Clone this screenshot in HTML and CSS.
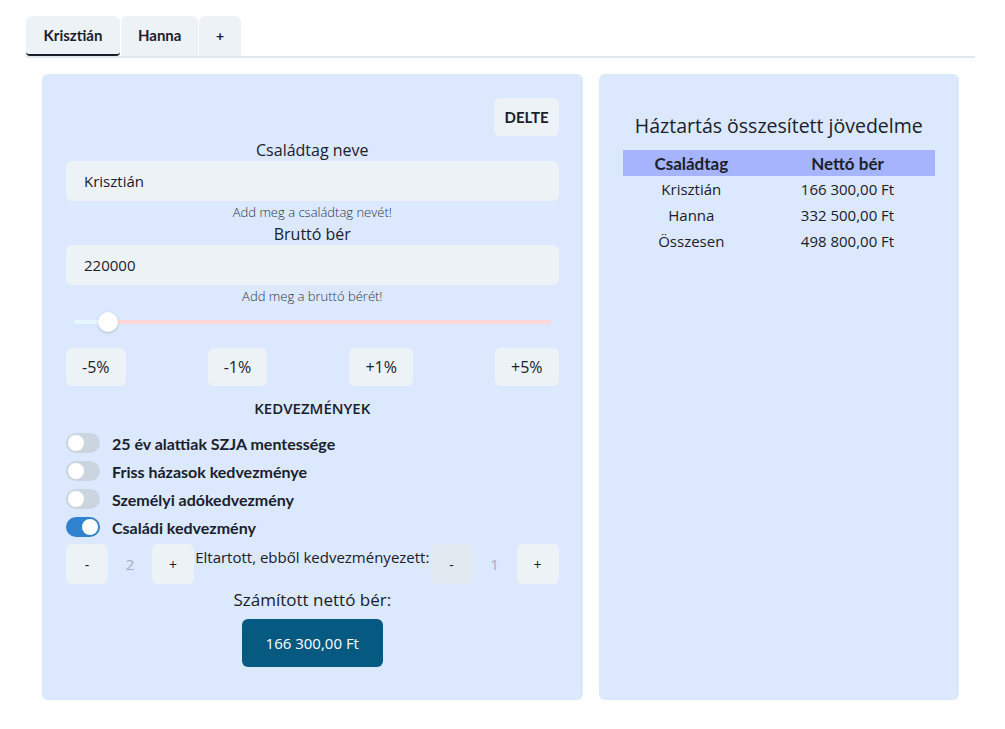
FILE: index.html
```html
<!DOCTYPE html>
<html lang="hu">
<head>
<meta charset="utf-8">
<title>Háztartás</title>
<link rel="stylesheet" href="styles.css">
</head>
<body>
<div class="app">
  <div class="tabs">
    <button class="tab active">Krisztián</button>
    <button class="tab">Hanna</button>
    <button class="tab plus">+</button>
  </div>
  <div class="content">
    <section class="panel left">
      <div class="del-row"><button class="btn del">DELTE</button></div>
      <label class="label">Családtag neve</label>
      <div class="input">Krisztián</div>
      <div class="helper">Add meg a családtag nevét!</div>
      <label class="label">Bruttó bér</label>
      <div class="input">220000</div>
      <div class="helper">Add meg a bruttó bérét!</div>
      <div class="slider">
        <div class="track"><div class="fill"></div><div class="rest"></div></div>
        <div class="thumb"></div>
      </div>
      <div class="pct-row">
        <button class="btn pct">-5%</button>
        <button class="btn pct">-1%</button>
        <button class="btn pct">+1%</button>
        <button class="btn pct">+5%</button>
      </div>
      <h3 class="section-title">KEDVEZMÉNYEK</h3>
      <ul class="toggles">
        <li><span class="switch"><span class="knob"></span></span>25 év alattiak SZJA mentessége</li>
        <li><span class="switch"><span class="knob"></span></span>Friss házasok kedvezménye</li>
        <li><span class="switch"><span class="knob"></span></span>Személyi adókedvezmény</li>
        <li><span class="switch on"><span class="knob"></span></span>Családi kedvezmény</li>
      </ul>
      <div class="counter-row">
        <div class="counter">
          <button class="btn sq">-</button>
          <span class="num">2</span>
          <button class="btn sq">+</button>
        </div>
        <div class="counter-text">Eltartott, ebből kedvezményezett:</div>
        <div class="counter">
          <button class="btn sq dim">-</button>
          <span class="num">1</span>
          <button class="btn sq">+</button>
        </div>
      </div>
      <div class="result-label">Számított nettó bér:</div>
      <div class="result-row"><button class="result">166 300,00 Ft</button></div>
    </section>
    <section class="panel right">
      <h2 class="title">Háztartás összesített jövedelme</h2>
      <table class="summary">
        <thead><tr><th>Családtag</th><th>Nettó bér</th></tr></thead>
        <tbody>
          <tr><td>Krisztián</td><td>166 300,00 Ft</td></tr>
          <tr><td>Hanna</td><td>332 500,00 Ft</td></tr>
          <tr><td>Összesen</td><td>498 800,00 Ft</td></tr>
        </tbody>
      </table>
    </section>
  </div>
</div>
</body>
</html>
```

FILE: styles.css
```css
* { box-sizing: border-box; }
html, body { margin: 0; padding: 0; background: #fff; }
body {
  font-family: "Open Sans", "Noto Sans", sans-serif;
  color: #1a202c;
  font-size: 15px;
}
button { font-family: inherit; color: inherit; border: 0; cursor: pointer; }
.app { padding: 16px 30px 0 26px; }
.tabs {
  display: flex;
  gap: 1px;
  border-bottom: 2px solid #e2e8f0;
}
.tab {
  height: 40px;
  padding: 0 17px;
  background: #edf2f7;
  border-radius: 6px 6px 0 0;
  font-family: "Lato", sans-serif;
  font-weight: 700;
  font-size: 15px;
  border-bottom: 2px solid transparent;
}
.tab.active { padding: 0 17.5px; border-bottom: 2px solid #1a202c; border-radius: 6px 6px 4px 4px; }
.tab.plus { padding: 0 16.5px; font-size: 14px; }
.content {
  display: grid;
  grid-template-columns: 3fr 2fr;
  gap: 16px;
  padding: 16px 16px 0;
}
.panel {
  background: #dbe8fe;
  border-radius: 6px;
  height: 626px;
}
.panel.left { padding: 24px 24px 24px; display: flex; flex-direction: column; }
.btn {
  background: #edf2f7;
  border-radius: 6px;
  font-size: 14px;
  font-weight: 600;
}
.del-row { display: flex; justify-content: flex-end; margin-bottom: 3px; }
.del { height: 38px; padding: 0 10px; font-family: "Lato", sans-serif; font-weight: 700; font-size: 15px; }
.label { text-align: center; font-size: 16px; line-height: 22px; }
.input {
  height: 40px;
  background: #edf2f7;
  border-radius: 6px;
  padding: 0 18px;
  display: flex;
  align-items: center;
  font-size: 15px;
}
.helper {
  text-align: center;
  font-size: 13px;
  font-weight: 300;
  line-height: 22px;
  color: #2d3748;
}
.slider { position: relative; height: 20px; margin: 5px 8px 0; }
.track { display: flex; height: 4px; margin-top: 8px; border-radius: 2px; overflow: hidden; }
.fill { width: 30px; background: #e6f8ff; }
.rest { flex: 1; background: #fed7d7; }
.thumb {
  position: absolute;
  left: 24px; top: 0;
  width: 20px; height: 20px;
  border-radius: 50%;
  background: #fff;
  box-shadow: 0 1px 3px rgba(0,0,0,0.18);
}
.pct-row { display: flex; justify-content: space-between; margin-top: 16px; }
.pct { height: 38px; padding: 0 16px; font-weight: 500; font-size: 16px; }
.section-title {
  margin: 12px 0 0;
  text-align: center;
  font-size: 15px;
  font-weight: 600;
  line-height: 20px;
}
.toggles { list-style: none; margin: 11px 0 0; padding: 0; }
.toggles li {
  display: flex;
  align-items: center;
  height: 28px;
  font-family: "Lato", sans-serif;
  font-weight: 700;
  font-size: 16px;
}
.switch {
  width: 34px; height: 20px;
  border-radius: 10px;
  background: #cbd5e0;
  padding: 2px;
  margin-right: 12px;
  display: flex;
}
.knob { width: 16px; height: 16px; border-radius: 50%; background: #fff; }
.switch.on { background: #3182ce; justify-content: flex-end; }
.counter-row { display: flex; margin-top: 3px; }
.counter { display: flex; align-items: center; }
.sq { width: 42px; height: 40px; font-weight: 500; font-size: 14px; }
.sq.dim { background: #e2e8f0; }
.num { width: 44px; text-align: center; color: #a0aec0; font-size: 15px; }
.counter-text {
  flex: 1;
  text-align: center;
  font-size: 15px;
  line-height: 22px;
  padding-top: 2px;
  white-space: nowrap;
}
.result-label { text-align: center; font-size: 17px; margin-top: 4px; line-height: 24px; }
.result-row { display: flex; justify-content: center; margin-top: 7px; }
.result {
  height: 48px;
  padding: 0 24px;
  background: #065a82;
  color: #fff;
  border-radius: 6px;
  font-size: 15px;
  font-weight: 500;
}
.panel.right { padding: 39px 24px 24px; }
.title {
  margin: 0;
  text-align: center;
  font-size: 19.5px;
  font-weight: 500;
  line-height: 26px;
}
.summary { width: 100%; border-collapse: collapse; margin-top: 11px; }
.summary th {
  background: #a5b4fc;
  font-family: "Lato", sans-serif;
  font-weight: 700;
  font-size: 17px;
  height: 26px;
  padding: 0;
}
.summary td { text-align: center; height: 26px; font-size: 15px; padding: 0; }
.summary th:first-child, .summary td:first-child { width: 44%; }
```
